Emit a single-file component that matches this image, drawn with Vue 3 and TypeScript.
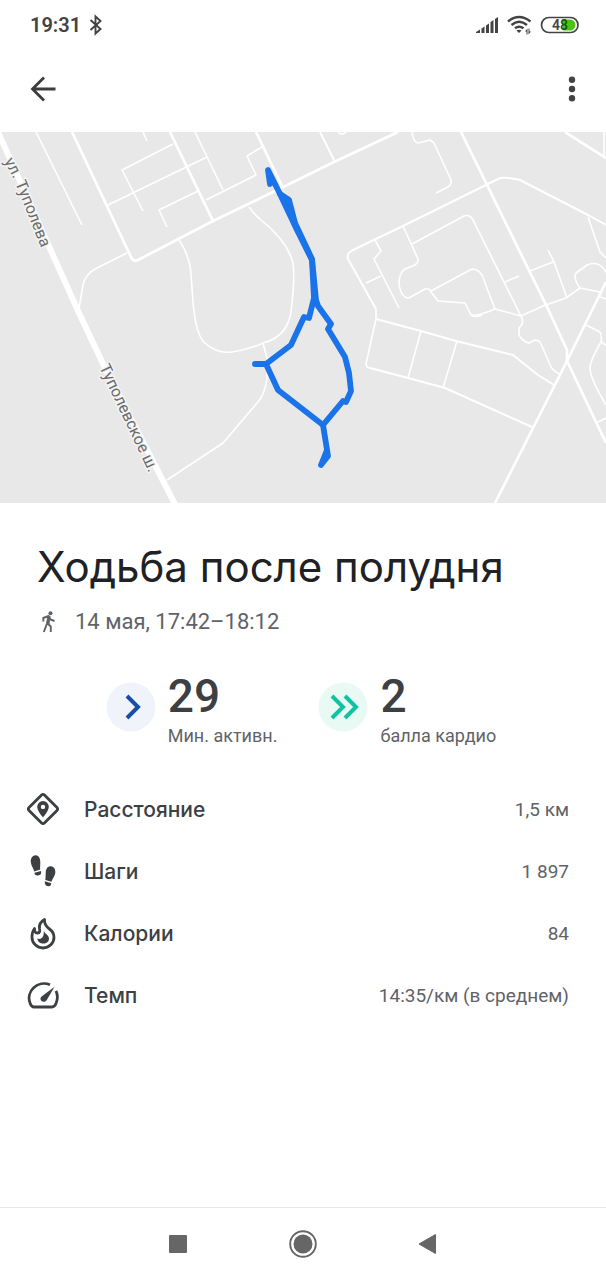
<script setup lang="ts">
interface Metric {
  id: 'distance' | 'steps' | 'calories' | 'pace'
  label: string
  value: string
}

const metrics: Metric[] = [
  { id: 'distance', label: 'Расстояние', value: '1,5 км' },
  { id: 'steps', label: 'Шаги', value: '1 897' },
  { id: 'calories', label: 'Калории', value: '84' },
  { id: 'pace', label: 'Темп', value: '14:35/км (в среднем)' },
]

const mediumRoads: string[] = [
  'M72 132L131 257Q133 262 138 260L213 221L273 192L334 162L398 132',
  'M170 132L213 221',
  'M256 132L283 188',
  'M461 132L548 309L567 350V361L606 443',
  'M565 132L606 158',
  'M606 282L567 361L495 503',
]

const smallRoads: string[] = [
  'M403 226L486 185L498 179Q503 176 520 180L588 215L606 225',
  'M376 309L348 259Q346 254 353 250L403 226',
  'M320 132L335 162',
  'M376 319L421 331L456 341L513 355L538 375L554 385',
  'M370 368L408 378L445 388L532 427',
]

const thinRoads: string[] = [
  'M36 132L82 225',
  'M143 132L147 141',
  'M173 144L122 170L143 211',
  'M108 205L207 157',
  'M195 132L223 190',
  'M198 191L159 210L167 227',
  'M206 200L256 175L247 156L262 147',
  'M127 253L95 269Q85 275 83 285L79 308',
  'M179 240Q190 256 191 274L193 302Q196 336 205 343Q217 354 232 352Q248 350 263 343Q287 337 291 312Q296 270 292 260Q286 240 261 220Q254 214 249 207',
  'M263 343L268 362L267 378Q265 395 257 403L223 443L167 480',
  'M338 132Q342 136 346 132',
  'M412 132Q413 142 418 143L430 140L434 143L451 180Q452 184 448 187L436 193',
  'M376 309L376 319L366 364Q367 368 370 368',
  'M375 240L381 251L374 259L399 308',
  'M366 283L381 276',
  'M403 226L418 259Q419 262 415 265L405 269Q399 273 399 284Q401 298 409 298L425 289Q430 288 431 292L438 301L465 303L471 315Q476 317 495 309L521 316L543 306L566 298L580 288L600 292',
  'M412 244L464 216Q470 214 473 220L521 316',
  'M431 291L470 270Q476 267 482 275L495 309',
  'M505 282L519 276',
  'M530 271L553 262M548 250L554 262L567 298',
  'M604 132V155',
  'M588 217L600 252L606 258',
  'M580 288Q573 279 576 273L587 265Q599 260 606 272',
  'M600 297L606 299',
  'M521 316Q525 323 519 328L519 335Q523 342 529 343L535 340Q539 340 541 344L551 367Q555 373 561 374',
  'M471 315Q476 318 482 315',
  'M421 331L408 378M457 341L443 388',
  'M586 325L600 332Q602 335 601 342Q590 361 590 368Q590 378 606 405',
  'M596 423L606 418M601 342L606 345',
]

const route: string[] = [
  'M270 184L268 170L280 194L289 200L295 223L312 259L316 300L318 306L331 324L328 329L345 357L349 373L351 391L346 402L343 401L323 425L328 456L321 465L327 450',
  'M280 194L297 230L312 260L314 298L309 318L304 317L291 345L266 364L255 364M266 364L278 390L323 425',
]
</script>

<template>
  <div class="screen">
    <div class="status">
      <div class="status-side">
        <span class="clock">19:31</span>
        <svg width="14" height="22" viewBox="0 0 14 22" aria-hidden="true">
          <path d="M1.500 6L11.500 15L6.500 19.500V2.500L11.500 7L1.500 16" fill="none" stroke="#434343" stroke-width="1.900" />
        </svg>
      </div>
      <div class="status-side">
        <svg width="24" height="18" viewBox="0 0 24 18" aria-hidden="true">
          <path d="M1 17V16L5 13.500V17ZM6.500 17V12.500L9.500 10.500V17ZM11 17V9.500L14 7.500V17ZM15.500 17V6L18.500 4V17ZM20 17V3L23 1V17Z" fill="#434343" />
        </svg>
        <svg width="25" height="20" viewBox="0 0 25 20" aria-hidden="true">
          <g fill="none" stroke="#434343" stroke-width="2.400">
            <path d="M1 6.500Q12 -2.500 23.500 6.500" />
            <path d="M4.500 10Q12 3.500 20 10" />
            <path d="M8 13.300Q12 10 16.500 13.300" />
          </g>
          <path d="M9.500 15.500Q12 14 14.500 15.500L12 18ZM18 16.500L20.500 13.500V19.500H19.500V16.500ZM21.500 13.500H22.500V16.500H24L21.500 19.500Z" fill="#434343" />
        </svg>
        <svg width="40" height="18" viewBox="0 0 40 18" role="img" aria-label="Батарея 48">
          <rect x="1.500" y="1.500" width="36.500" height="15" rx="7.500" fill="#fff" stroke="#434343" stroke-width="1.700" />
          <path d="M23 3.500H30A5.500 5.500 0 0 1 30 14.500H23Z" fill="#4cc213" />
          <text class="charge" x="12" y="14" fill="#434343">4</text>
          <text class="charge" x="20" y="14" fill="#145808">8</text>
        </svg>
      </div>
    </div>

    <header class="appbar">
      <button type="button" class="icon-button" aria-label="Назад">
        <svg width="26" height="26" viewBox="0 0 26 26" aria-hidden="true">
          <path d="M25.500 13H2.500M14 1.500L2.500 13L14 24.500" fill="none" stroke="#3c3c3c" stroke-width="2.800" />
        </svg>
      </button>
      <button type="button" class="icon-button" aria-label="Ещё">
        <svg width="26" height="26" viewBox="0 0 26 26" aria-hidden="true">
          <g fill="#434343">
            <circle cx="13" cy="3.800" r="3.200" />
            <circle cx="13" cy="13" r="3.200" />
            <circle cx="13" cy="22.300" r="3.200" />
          </g>
        </svg>
      </button>
    </header>

    <main>
      <svg class="map" viewBox="0 132 606 371" role="img" aria-label="Маршрут на карте">
        <rect x="0" y="132" width="606" height="371" fill="#e8e8e8" />
        <g fill="none" stroke="#fff" stroke-linejoin="round">
          <path v-for="d in thinRoads" :key="d" :d="d" stroke-width="1.600" />
          <path v-for="d in smallRoads" :key="d" :d="d" stroke-width="2" />
          <path v-for="d in mediumRoads" :key="d" :d="d" stroke-width="2.700" />
          <path d="M-2 132L52 253L79 313L105 368L176 506" stroke-width="6" />
        </g>
        <path id="street-north" d="M4 161L14 180L42 250" fill="none" />
        <path id="street-south" d="M99 367L152 479" fill="none" />
        <text class="street"><textPath href="#street-north">ул. Туполева</textPath></text>
        <text class="street"><textPath href="#street-south">Туполевское ш.</textPath></text>
        <g fill="none" stroke="#1a73e8" stroke-width="5.800" stroke-linejoin="round" stroke-linecap="round">
          <path v-for="d in route" :key="d" :d="d" />
        </g>
      </svg>

      <section class="summary">
        <h1>Ходьба после полудня</h1>
        <p class="when">
          <svg width="14" height="22" viewBox="0 0 14 22" aria-hidden="true">
            <circle cx="8.500" cy="2.200" r="2" fill="#5f6368" />
            <path d="M1.300 10.500V7L6.500 5L8.500 8.500L12.500 10M6.500 5L5 12.500L1.800 21M5 12L8.800 15.500V21" fill="none" stroke="#5f6368" stroke-width="1.900" />
            <path d="M5.500 5H8.500L7.500 13H4.500Z" fill="#5f6368" />
          </svg>
          <span>14 мая, 17:42–18:12</span>
        </p>
      </section>

      <section class="scores">
        <div class="score">
          <svg width="50" height="50" viewBox="0 0 50 50" aria-hidden="true">
            <circle cx="25" cy="25" r="24.500" fill="#f0f4fa" />
            <path d="M21 14L32 25L21 36" fill="none" stroke="#174ea6" stroke-width="4" />
          </svg>
          <div>
            <strong>29</strong>
            <span>Мин. активн.</span>
          </div>
        </div>
        <div class="score">
          <svg width="50" height="50" viewBox="0 0 50 50" aria-hidden="true">
            <circle cx="25" cy="25" r="24.500" fill="#e9faf5" />
            <path d="M14 14L25 25L14 36M27 14L38 25L27 36" fill="none" stroke="#10c3a0" stroke-width="4" />
          </svg>
          <div>
            <strong>2</strong>
            <span>балла кардио</span>
          </div>
        </div>
      </section>

      <dl class="metrics">
        <div v-for="m in metrics" :key="m.id" class="metric">
          <dt>
            <svg width="34" height="34" viewBox="0 0 34 34" aria-hidden="true">
              <template v-if="m.id === 'distance'">
                <path d="M15.600 3Q17 1.600 18.400 3L31 15.600Q32.400 17 31 18.400L18.400 31Q17 32.400 15.600 31L3 18.400Q1.600 17 3 15.600Z" fill="none" stroke="#3c4043" stroke-width="2.800" />
                <path d="M17 9A5.800 5.800 0 0 0 11.200 14.800C11.200 19 17 25.500 17 25.500S22.800 19 22.800 14.800A5.800 5.800 0 0 0 17 9ZM17 12.700A2.200 2.200 0 1 1 17 17.100A2.200 2.200 0 1 1 17 12.700Z" fill="#3c4043" fill-rule="evenodd" />
              </template>
              <g v-else-if="m.id === 'steps'" fill="#3c4043">
                <path d="M9.500 1.300C13 1 14.500 5 14.300 9C14.200 12 14 14 14.200 15.500L8.200 17.500C8 15 5 12 4.800 8C4.600 4 6.500 1.500 9.500 1.300Z" />
                <path d="M8.500 18.800L15 17Q16 21 12 21.500Q8.700 22 8.500 18.800Z" />
                <path d="M24.800 12.300C21.500 12 19.800 15 19.700 19C19.600 22 19.700 24 19.300 26L25.500 27.800C25.700 25.500 29 22.500 29.300 18.500C29.500 15 27.800 12.500 24.800 12.300Z" />
                <path d="M18.800 27.300L25.300 29.300Q25 32.800 22 32.300Q18.300 31.500 18.800 27.300Z" />
              </g>
              <g v-else-if="m.id === 'calories'">
                <path d="M18.500 3.500C18 8 20 10.500 23.500 13C26.500 15.200 28 18 28 21.300A11 10.700 0 0 1 6 21.300C6 18 6.500 15 8.500 12.500C8.300 15 9 17 11.500 17C14 17 14 14.500 13.500 12.500C13 9 15 5.500 18.500 3.500Z" fill="none" stroke="#3c4043" stroke-width="2.800" stroke-linejoin="round" />
                <path d="M17.500 13.500C17.500 17.500 23 18.500 23 22.500C23 25.500 20.500 27.500 17.500 27.500C14 27.500 11.500 25.500 11.300 22.500C15.500 24.500 19 20 17.500 13.500Z" fill="#3c4043" />
              </g>
              <g v-else>
                <path d="M24 6.800A15 14.500 0 0 0 4.200 25.500Q5.500 29 8 29H26Q28.500 29 30 25.500Q32.800 19 30 12.800" fill="none" stroke="#3c4043" stroke-width="2.800" />
                <path d="M28.500 8.800L20.800 22C19 25 14.500 24 14.500 20.800C14.500 19.500 15 19 16 18.200Z" fill="#3c4043" />
              </g>
            </svg>
            {{ m.label }}
          </dt>
          <dd>{{ m.value }}</dd>
        </div>
      </dl>
    </main>

    <nav class="system-nav">
      <button type="button" aria-label="Недавние">
        <svg width="30" height="30" viewBox="0 0 30 30"><rect x="6" y="6" width="18" height="18" rx="1" fill="#666" /></svg>
      </button>
      <button type="button" aria-label="Домой">
        <svg width="30" height="30" viewBox="0 0 30 30">
          <circle cx="15" cy="15" r="12.800" fill="none" stroke="#666" stroke-width="1.900" />
          <circle cx="15" cy="15" r="9.500" fill="#666" />
        </svg>
      </button>
      <button type="button" aria-label="Назад">
        <svg width="30" height="30" viewBox="0 0 30 30"><path d="M6 15L22.500 5.500V24.500Z" fill="#666" stroke="#666" stroke-linejoin="round" /></svg>
      </button>
    </nav>
  </div>
</template>

<style>
body {
  background: #fff;
}
</style>

<style scoped>
.screen {
  display: flex;
  flex-direction: column;
  min-height: 100vh;
  background: #fff;
  color: #3c4043;
  font-family: Roboto, "Noto Sans", sans-serif;
}

svg {
  display: block;
  flex: none;
}

button {
  display: flex;
  align-items: center;
  justify-content: center;
  padding: 0;
  border: 0;
  background: none;
}

.status {
  display: flex;
  align-items: center;
  justify-content: space-between;
  height: 50px;
  padding: 0 26px 0 30px;
}

.status-side {
  display: flex;
  align-items: center;
  gap: 8px;
}

.clock {
  color: #434343;
  font-size: 20px;
  font-weight: 600;
}

.charge {
  font-size: 14px;
  font-weight: 600;
}

.appbar {
  display: flex;
  align-items: center;
  justify-content: space-between;
  height: 78px;
  padding: 0 10px 4px 19px;
}

.icon-button {
  width: 48px;
  height: 48px;
}

.map {
  width: 100%;
  height: auto;
}

.street {
  font-size: 16px;
  fill: #6b6b6b;
  stroke: #f4f4f4;
  stroke-width: 3px;
  stroke-linejoin: round;
  paint-order: stroke;
}

.summary {
  padding: 36px 37px 0;
}

h1 {
  margin: 0;
  color: #202124;
  font-family: Inter, "Noto Sans", sans-serif;
  font-size: 42px;
  font-weight: 400;
  line-height: 56px;
}

.when {
  display: flex;
  align-items: center;
  gap: 19px;
  margin: 13px 0 0 5px;
  color: #5f6368;
  font-size: 22px;
  line-height: 28px;
}

.scores {
  display: flex;
  justify-content: center;
  gap: 41px;
  margin-top: 36px;
  padding-right: 4px;
}

.score {
  display: flex;
  align-items: flex-start;
  gap: 12px;
}

.score svg {
  margin-top: 10px;
}

.score strong,
.score span {
  display: block;
}

.score strong {
  font-family: Roboto, "Noto Sans", sans-serif;
  font-size: 46px;
  font-weight: 500;
  line-height: 48px;
}

.score span {
  color: #5f6368;
  font-size: 18px;
  line-height: 32px;
}

.metrics {
  margin: 26px 0 0;
  padding: 0 37px 0 26px;
}

.metric {
  display: flex;
  align-items: center;
  justify-content: space-between;
  height: 62px;
}

dt {
  display: flex;
  align-items: center;
  gap: 24px;
  font-family: Inter, "Noto Sans", sans-serif;
  font-size: 21px;
  font-weight: 500;
}

dd {
  margin: 0;
  color: #5f6368;
  font-size: 19px;
}

.system-nav {
  display: grid;
  grid-template-columns: repeat(3, 125px);
  justify-content: center;
  height: 72px;
  margin-top: auto;
  border-top: 1px solid #e6e6e6;
}
</style>
